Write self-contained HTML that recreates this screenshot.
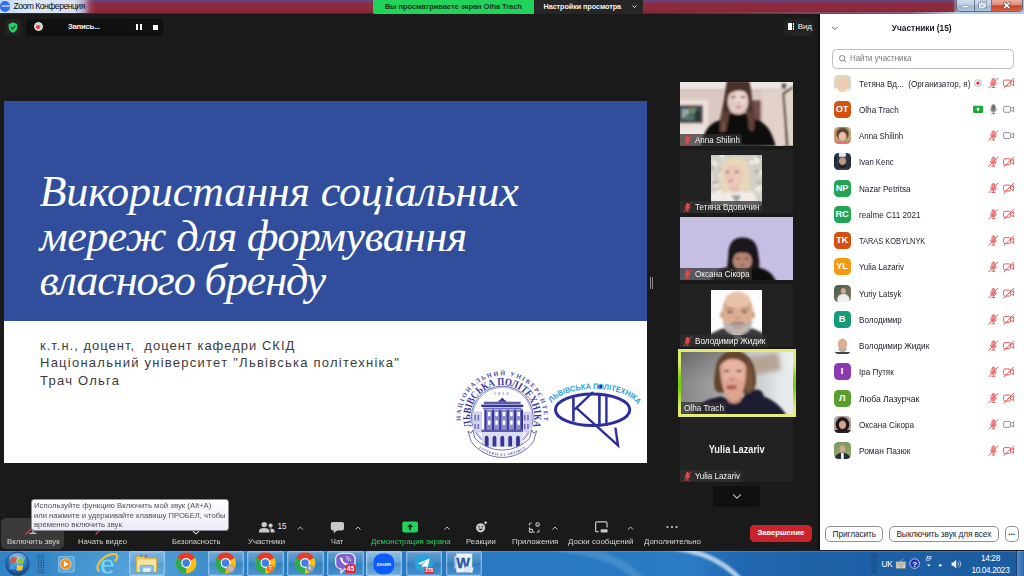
<!DOCTYPE html>
<html lang="ru">
<head>
<meta charset="utf-8">
<title>Zoom Конференция</title>
<style>
*{box-sizing:border-box;margin:0;padding:0}
html,body{width:1024px;height:576px;overflow:hidden;background:#1a1a1a;font-family:"Liberation Sans","DejaVu Sans",sans-serif;}
.abs{position:absolute}
svg{position:absolute;overflow:visible}
#root{position:relative;width:1024px;height:576px;overflow:hidden;background:#1a1a1a}
#titlebar{left:0;top:0;width:1024px;height:13.8px;background:linear-gradient(to bottom,#5b4c8e 0,#7a3a66 1.5px,#8d2c40 3.5px,#8e2a3c 9px,#802838 12.4px,#4a1c28 13.8px);}
#tb-left{left:0;top:0;width:96px;height:13.2px;background:linear-gradient(to right,#c6d9f1 0,#dfe9f6 30px,#d5e0f0 74px,rgba(200,195,222,.8) 84px,rgba(170,110,140,.35) 90px,rgba(150,60,80,0) 95px);}
#tb-title{left:13.4px;top:0;font-size:8.6px;line-height:13.4px;color:#0a0a0a;white-space:nowrap;letter-spacing:-.5px}
#banner{left:373px;top:0;width:160.5px;height:13.8px;background:#23d25a;color:#123a1c;font-size:7.6px;font-weight:bold;line-height:13.4px;text-align:center;white-space:nowrap;letter-spacing:-.1px;border-radius:0 0 0 2px}
#viewopt{left:533.5px;top:0;width:109.5px;height:13.8px;border-radius:0 0 2px 0;background:#262626;color:#f2f2f2;font-size:7.3px;font-weight:bold;line-height:13px;white-space:nowrap;padding-left:10px;letter-spacing:-.1px}
#slide{left:4px;top:101px;width:642.5px;height:362px;background:#fff}
#slide-blue{left:0;top:0;width:100%;height:219.5px;background:#304e9c}
#slide-title{left:35.6px;top:69.4px;color:#fff;font-family:"Liberation Serif","DejaVu Serif",serif;font-style:italic;font-size:44.2px;line-height:44.5px;white-space:nowrap}
#slide-sub{left:36px;top:236.2px;color:#3c3c3c;font-size:13px;line-height:17.2px;white-space:nowrap;letter-spacing:1.25px}
#panel{left:819.6px;top:13.8px;width:204.4px;height:536.7px;background:#fff}
#panel-edge{left:818.2px;top:13.8px;width:1.6px;height:536.7px;background:#101010}
.pname{position:absolute;left:858.6px;font-size:9.2px;line-height:12px;color:#232333;white-space:nowrap}
.pav{position:absolute;left:833.5px;width:17px;height:17px;border-radius:4.5px;color:#fff;font-weight:bold;font-size:9.3px;line-height:17.4px;text-align:center;overflow:hidden;letter-spacing:-.3px}
.tile{position:absolute;left:680px;width:113.3px;height:63.6px;background:#222;overflow:hidden}
.tlab{position:absolute;left:0;bottom:0;height:12px;background:rgba(48,48,48,.74);color:#f4f4f4;font-size:9.2px;line-height:12.4px;white-space:nowrap;padding:0 0 0 14.6px;border-radius:0 2px 0 0;overflow:hidden}
.tlab.nomic{padding-left:3.2px}
.tl{position:absolute;top:537.2px;font-size:8px;line-height:10px;color:#dcdcdc;white-space:nowrap}
#taskbar{left:0;top:550.5px;width:1024px;height:25.5px;background:linear-gradient(to right,#2f83c4 0,#3a8ccb 110px,#2a7cc0 300px,#2879c0 520px,#2a7cc2 690px,#2068b0 740px,#1e62a8 820px,#1b5a9f 1024px)}
.tbtn{position:absolute;top:551.2px;height:25px;border:1px solid rgba(190,220,250,.55);border-radius:2px;background:linear-gradient(to bottom,rgba(255,255,255,.28),rgba(255,255,255,.12) 45%,rgba(255,255,255,.04) 50%,rgba(255,255,255,.14));box-shadow:inset 0 0 0 1px rgba(255,255,255,.12)}
.pbtn{position:absolute;top:525.8px;height:16px;border:1px solid #8e8e9c;border-radius:5px;background:#fff;color:#232333;font-size:8.3px;line-height:14px;text-align:center;white-space:nowrap;letter-spacing:-.1px}
</style>
</head>
<body>
<div id="root">
  <div id="titlebar" class="abs"></div>
  <div id="tb-left" class="abs"></div>
  <div id="tb-title" class="abs">Zoom Конференция</div>
  <div id="banner" class="abs">Вы просматриваете экран Olha Trach</div>
  <div id="viewopt" class="abs">Настройки просмотра</div>
  <div class="abs" style="left:953px;top:0;width:71px;height:13.8px;background:linear-gradient(to right,rgba(168,192,220,0) 0,#a9c1dd 5px,#a9c1dd 100%)"></div>
<div class="abs" style="left:640px;top:11.6px;width:384px;height:2.2px;background:linear-gradient(to right,rgba(120,40,60,0),rgba(150,150,190,.5) 70%,#b4cbe4 82%)"></div>
<div class="abs" style="left:956px;top:-1px;width:66.5px;height:12.5px;border:1px solid #5f6f86;border-radius:0 0 4px 4px;background:linear-gradient(to bottom,#cfdcec 0,#bccde2 48%,#9fb7d4 52%,#aec3dd 100%)"></div>
<div class="abs" style="left:974.3px;top:0;width:1px;height:11px;background:#66768c"></div>
<div class="abs" style="left:991px;top:0;width:31px;height:11px;border-radius:0 0 4px 0;border-left:1px solid #66768c;background:linear-gradient(to bottom,#eeb0a2 0,#dd8a78 45%,#c9432a 52%,#d8603f 100%)"></div>
<svg style="left:0;top:0" width="1024" height="16" viewBox="0 0 1024 16"><rect x="962" y="5.4" width="7" height="2.4" rx=".6" fill="#fff" stroke="#5a6578" stroke-width=".5"/><g fill="none" stroke="#5a6578" stroke-width="2.2"><rect x="981.2" y="2" width="4.6" height="4.2"/><rect x="979.6" y="3.8" width="4.6" height="4.2"/></g><g fill="none" stroke="#fff" stroke-width="1.1"><rect x="981.2" y="2" width="4.6" height="4.2"/><rect x="979.6" y="3.8" width="4.6" height="4.2" fill="#b6c8de"/></g><path d="M1004.6 3.2L1009 7.6M1009 3.2L1004.6 7.6" stroke="#6a3a3a" stroke-width="2.8" stroke-linecap="square"/><path d="M1004.6 3.2L1009 7.6M1009 3.2L1004.6 7.6" stroke="#fff" stroke-width="1.6" stroke-linecap="square"/></svg>
<div class="abs" style="left:0;top:1px;width:10px;height:10.5px;border-radius:5px;background:#2d6ff0"></div><div class="abs" style="left:1.6px;top:4px;font-size:3px;line-height:4px;color:#fff;font-weight:bold">zoom</div>
<svg style="left:630.5px;top:4.4px" width="7" height="6" viewBox="0 0 7 6"><path d="M1.6 1.6L3.5 3.5L5.4 1.6" fill="none" stroke="#eee" stroke-width="1"/></svg>
<div class="abs" style="left:5px;top:19px;width:15.5px;height:16.5px;border-radius:3px;background:#222"></div>
<svg style="left:8px;top:22px" width="10" height="11" viewBox="0 0 10 11"><path d="M5 .3L9.3 1.9V5.2C9.3 7.9 7.4 9.8 5 10.7C2.6 9.8 .7 7.9 .7 5.2V1.9Z" fill="#25d060"/><path d="M2.9 5.4L4.4 6.9L7.2 3.9" fill="none" stroke="#14401f" stroke-width="1.2"/></svg>
<div class="abs" style="left:26px;top:19px;width:137px;height:16.5px;border-radius:3px;background:#0f0f0f"></div>
<div class="abs" style="left:129px;top:19px;width:34px;height:16.5px;border-radius:0 3px 3px 0;background:#111"></div>
<div class="abs" style="left:33.6px;top:22.4px;width:9px;height:9px;border-radius:5px;background:#cfcfcf;border:1px solid #e6e6e6"></div><div class="abs" style="left:36.1px;top:24.9px;width:4px;height:4px;border-radius:2px;background:#e8353a"></div>
<div class="abs" style="left:68px;top:21px;font-size:7.8px;font-weight:bold;line-height:12px;color:#f2f2f2;letter-spacing:-.3px">Запись...</div>
<div class="abs" style="left:135.8px;top:24.4px;width:2.2px;height:6px;background:#fff"></div><div class="abs" style="left:139.6px;top:24.4px;width:2.2px;height:6px;background:#fff"></div><div class="abs" style="left:152.8px;top:24.6px;width:5.4px;height:5.6px;background:#fff"></div>
<div class="abs" style="left:784px;top:19.3px;width:29.5px;height:16.4px;border-radius:4.5px;background:#232323"></div>
<div class="abs" style="left:788px;top:23.4px;width:4px;height:6.6px;background:#fff"></div><div class="abs" style="left:792.7px;top:23.4px;width:1.4px;height:1.6px;background:#fff;box-shadow:0 2.5px 0 #fff,0 5px 0 #fff"></div>
<div class="abs" style="left:797.8px;top:21.2px;font-size:8px;line-height:12px;color:#f4f4f4;letter-spacing:-.2px">Вид</div>
<div class="abs" style="left:650px;top:277px;width:1px;height:12px;background:#8a8a8a"></div><div class="abs" style="left:652px;top:277px;width:1px;height:12px;background:#8a8a8a"></div>
  <div id="slide" class="abs">
    <div id="slide-blue" class="abs"></div>
    <div id="slide-title" class="abs"><span id="st1" style="letter-spacing:-0.218px">Використання соціальних</span><br><span id="st2" style="letter-spacing:-0.636px">мереж для формування</span><br><span id="st3" style="letter-spacing:-1.122px">власного бренду</span></div>
    <div id="slide-sub" class="abs"><span style="letter-spacing:1px">к.т.н., доцент,&nbsp; доцент кафедри СКІД</span><br>Національний університет "Львівська політехніка"<br>Трач Ольга</div>
  </div>
  <svg id="logos" class="abs" style="left:0;top:0" width="1024" height="576" viewBox="0 0 1024 576">
    <defs>
      <path id="arcA" d="M460.86 420.63A41.6 41.6 0 1 1 543.74 420.63"/>
      <path id="arcB" d="M471.70 426.36A32.0 32.0 0 1 1 532.90 426.36"/>
      <path id="arcC" d="M476.46 446.29A40.2 40.2 0 0 0 528.14 446.29"/>
      <path id="arcD" d="M551.58 402.99A45 21 0 0 1 637.66 404.92"/>
    </defs>
    <g fill="#35359b" stroke="none" font-family="'Liberation Serif','DejaVu Serif',serif">
      <text font-size="6.3" font-weight="bold" fill="#4d4da0"><textPath href="#arcA" textLength="138.0" lengthAdjust="spacing">НАЦІОНАЛЬНИЙ УНІВЕРСИТЕТ</textPath></text>
      <text font-size="10.6" font-weight="bold"><textPath href="#arcB" textLength="119.5" lengthAdjust="spacingAndGlyphs">ЛЬВІВСЬКА ПОЛІТЕХНІКА</textPath></text>
      <text x="502.3" y="395" font-size="4.4" text-anchor="middle" fill="#4d4da0" letter-spacing="2">·1816·</text>
    </g>
    <g fill="none" stroke="#35359b">
      <path d="M487.79 444.28A30.9 30.9 0 1 1 516.81 444.28" stroke-width=".7"/>
      <path d="M486.61 442.10A29.6 29.6 0 1 1 517.99 442.10" stroke-width=".4"/>
    </g>
    <g fill="#35359b">
      <rect x="473" y="411.5" width="9" height="21" fill="#d2d2ea"/>
      <rect x="522.6" y="411.5" width="9" height="21" fill="#d2d2ea"/>
      <g fill="#6e6eb8"><rect x="474.4" y="415" width="1.5" height="5.5"/><rect x="477.6" y="415" width="1.5" height="5.5"/><rect x="527.2" y="415" width="1.5" height="5.5"/><rect x="524" y="415" width="1.5" height="5.5"/>
      <rect x="474.4" y="424" width="1.5" height="5"/><rect x="477.6" y="424" width="1.5" height="5"/><rect x="527.2" y="424" width="1.5" height="5"/><rect x="524" y="424" width="1.5" height="5"/></g>
      <path d="M497.5 401.8 L500.5 399.6 L502.3 397.6 L504.1 399.6 L507.1 401.8 Z"/>
      <rect x="484" y="401.7" width="36.6" height="2.4" fill="#5a5ab0"/>
      <rect x="481.3" y="404.6" width="42" height="2.4"/>
      <rect x="483" y="407.6" width="38.6" height="1.6" fill="#6e6eb8"/>
      <g fill="#8c8cc8"><rect x="486.7" y="409.5" width="5" height="20.5"/><rect x="494.1" y="409.5" width="5" height="20.5"/><rect x="501.5" y="409.5" width="5" height="20.5"/><rect x="508.9" y="409.5" width="5" height="20.5"/><rect x="516.3" y="409.5" width="5" height="20.5"/></g>
      <g fill="#fff"><rect x="487.9" y="412" width="2.6" height="4.2"/><rect x="487.9" y="420.5" width="2.6" height="4.2"/><rect x="495.3" y="412" width="2.6" height="4.2"/><rect x="495.3" y="420.5" width="2.6" height="4.2"/><rect x="502.7" y="412" width="2.6" height="4.2"/><rect x="502.7" y="420.5" width="2.6" height="4.2"/><rect x="510.1" y="412" width="2.6" height="4.2"/><rect x="510.1" y="420.5" width="2.6" height="4.2"/><rect x="517.4" y="412" width="2.6" height="4.2"/><rect x="517.4" y="420.5" width="2.6" height="4.2"/></g>
      <rect x="484.3" y="409.5" width="2.4" height="20.5"/><rect x="491.7" y="409.5" width="2.4" height="20.5"/><rect x="499.1" y="409.5" width="2.4" height="20.5"/><rect x="506.5" y="409.5" width="2.4" height="20.5"/><rect x="513.9" y="409.5" width="2.4" height="20.5"/><rect x="520.6" y="409.5" width="2.4" height="20.5"/>
      <rect x="481.5" y="429.6" width="41.4" height="2.6" fill="#5a5ab0"/>
      <rect x="482" y="432.8" width="40.7" height="14" fill="#dcdcef"/>
      <path d="M484.8 446.6v-8.6a1.9 2.2 0 0 1 3.8 0v8.6zM492.6 446.6v-8.6a1.9 2.2 0 0 1 3.8 0v8.6zM500.4 446.6v-8.6a1.9 2.2 0 0 1 3.8 0v8.6zM508.3 446.6v-8.6a1.9 2.2 0 0 1 3.8 0v8.6zM516.1 446.6v-8.6a1.9 2.2 0 0 1 3.8 0v8.6z"/>
    </g>
    <g fill="none" stroke="#35359b">
      <path d="M468 431 L471 433.2 L472.8 430 L475 438.4 A37.7 37.7 0 0 0 529.6 438.4 L531.8 430 L533.6 433.2 L536.6 431 L533.6 441.4 A38.6 38.6 0 0 1 471 441.4 Z" stroke-width=".7" fill="#fff"/>
    </g>
    <g font-family="'Liberation Serif',serif">
      <text font-size="3.6" fill="#4d4da0" font-weight="bold" letter-spacing=".55"><textPath href="#arcC" startOffset="50%" text-anchor="middle">LITTERIS ET ARTIBUS</textPath></text>
    </g>
    <g fill="none" stroke="#2e2e9c" stroke-width="3" stroke-linejoin="miter">
      <ellipse cx="592.6" cy="409.8" rx="37.2" ry="15.8"/>
      <path d="M573.4 397.5V421.5" stroke-width="2.6"/>
      <path d="M574.6 409.6L593 392" stroke-width="2.4"/>
      <path d="M576 407.6L618 445.3L615.4 427.6" stroke-width="2.4"/>
      <path d="M599.4 393V426" stroke-width="2.6"/>
      <path d="M606.4 396.5V425.6" stroke-width="2.4"/>
    </g>
    <circle cx="600.2" cy="386.8" r="2.3" fill="#2e2e9c"/>
    <text font-family="'Liberation Sans','DejaVu Sans',sans-serif" font-size="8" font-weight="bold" fill="#1f9fe2"><textPath href="#arcD" textLength="93.7" lengthAdjust="spacingAndGlyphs">ЛЬВІВСЬКА ПОЛІТЕХНІКА</textPath></text>
  </svg>
  <div class="tile" style="top:82.3px"><svg style="left:0;top:0" width="113.3" height="63.6" viewBox="0 0 113.3 63.6"><defs><filter id="b1" x="-10%" y="-10%" width="120%" height="120%"><feGaussianBlur stdDeviation=".85"/></filter><filter id="b1b" x="-10%" y="-10%" width="120%" height="120%"><feGaussianBlur stdDeviation="1.5"/></filter></defs><rect width="113.3" height="63.6" fill="#dcc8c3"/><g filter="url(#b1)"><rect x="-2" y="-2" width="118" height="9.2" fill="#ece6e4"/><rect x="-2" y="7" width="118" height="1.3" fill="#cdb9b4"/><rect x="82" y="8" width="22" height="57" fill="#e3d1cc"/><rect x="-2" y="17.6" width="30" height="32" fill="#e9dfdb"/><rect x="-2" y="46.6" width="32" height="18" fill="#efe5e0"/><rect x="-2" y="23.2" width="24.8" height="18" fill="#5e3d37"/><rect x="-2" y="24.8" width="23" height="14.8" fill="#3f5356"/><rect x="2" y="27" width="7" height="9" fill="#8fa6a6"/><rect x="9.6" y="25.6" width="6" height="6" fill="#6f8a68"/><rect x="15" y="29" width="5.4" height="9.6" fill="#26383a"/><rect x="5" y="33" width="9" height="5" fill="#55706a"/><rect x="71" y="18.4" width="9.6" height="24.4" fill="#6e4d4c"/><rect x="80.6" y="19" width="1.6" height="22" fill="#bfa29e"/><path d="M102.6 11.4L113.3 4V63.6H107Z" fill="#dcd5c8"/><path d="M102.2 11L113.3 3.4V6.2L104.6 12.2L108.6 63.6H106Z" fill="#65463c"/><rect x="101.6" y="1.4" width="4.6" height="5" fill="#4f4a48"/></g><g filter="url(#b1)"><path d="M47 -1C45 8 44.4 18 42 28C40.4 36 38.4 42 38.6 49.6L50 52L66 52L73.6 49.6C76.6 44 75 36 73.4 28C71.6 18 72 8 69 -1Z" fill="#49312a"/><path d="M21 64C23.6 50 28 42.6 38 38.8C44 36.8 48.6 35 50.4 30.6L66 30.6C67.6 35 72 37 79 39C88 42.4 92.6 52 95.6 64Z" fill="#0c0c0f"/><path d="M42 29C40.4 38 38.8 44 39.8 50.4L46.8 48.6C47.6 42 48.4 36 50 31Z" fill="#5e4034"/><path d="M73.2 29C75 38 75.6 44 73 50.2L68.2 46.6C68.8 42 68 36 66.4 31Z" fill="#5e4034"/><path d="M43.6 40C43 44 43 47 43.6 49.6" stroke="#8a6a58" stroke-width="1.4" fill="none"/><ellipse cx="58" cy="19.4" rx="10.4" ry="13.2" fill="#e3c8bf"/><ellipse cx="60" cy="16" rx="6" ry="7" fill="#ecd6cf"/><path d="M47 -1C46.4 5 46.8 9 48 12.8C52 9.4 56 8.2 60 8.4C64 8.6 66.8 10 69.2 12.8C70.2 8 70 4 69 -1Z" fill="#49312a"/><ellipse cx="53.4" cy="15.2" rx="2.4" ry=".9" fill="#5e443e"/><ellipse cx="63" cy="15.2" rx="2.4" ry=".9" fill="#5e443e"/><ellipse cx="58.4" cy="24.8" rx="3.2" ry=".9" fill="#b27870"/><ellipse cx="58.6" cy="20.8" rx="1.6" ry="1" fill="#c9a49a"/><path d="M50 28C53 32.6 63 32.6 66.4 28L66 31L50.4 31Z" fill="#c9a69c"/></g></svg><div class="tlab" style="width:61.7px"><svg style="left:2.6px;top:1.1px" width="9" height="10.6" viewBox="-5 -6 10 12"><g fill="none" stroke="#ea4a44" stroke-width="1" stroke-linecap="round"><rect x="-1.5" y="-4.4" width="3" height="5.8" rx="1.5" fill="#ea4a44"/><path d="M-2.8 -.4a2.8 2.8 0 0 0 5.6 0M0 2.5V4.2M-1.5 4.3H1.5"/><path d="M-4.2 5L4.2 -5" stroke-width="1.1"/></g></svg><span id="lb1" style="display:inline-block;transform-origin:0 50%;transform:scaleX(0.8703)">Anna Shilinh</span></div></div><div class="tile" style="top:149.8px;height:62.9px"><svg style="left:31px;top:5.5px" width="51" height="51.1" viewBox="0 0 51 51"><defs><filter id="b2" x="-10%" y="-10%" width="120%" height="120%"><feGaussianBlur stdDeviation=".8"/></filter><clipPath id="c2"><rect width="51" height="51"/></clipPath></defs><g clip-path="url(#c2)"><rect width="51" height="51" fill="#d3cfc5"/><g filter="url(#b2)"><ellipse cx="12.0" cy="4.5" rx="1.8" ry="1.0" fill="#efede8"/><ellipse cx="1.0" cy="24.2" rx="1.6" ry="1.1" fill="#f3f1ec"/><ellipse cx="27.4" cy="12.2" rx="1.4" ry="1.0" fill="#f3f1ec"/><ellipse cx="48.1" cy="1.1" rx="2.1" ry="2.2" fill="#b3ada0"/><ellipse cx="9.9" cy="13.6" rx="2.1" ry="1.2" fill="#b3ada0"/><ellipse cx="30.9" cy="29.6" rx="1.9" ry="1.3" fill="#efede8"/><ellipse cx="14.3" cy="41.6" rx="2.3" ry="2.6" fill="#f6f4f0"/><ellipse cx="0.4" cy="12.8" rx="2.2" ry="2.4" fill="#b3ada0"/><ellipse cx="25.9" cy="18.2" rx="2.0" ry="1.7" fill="#bdb7aa"/><ellipse cx="11.9" cy="11.4" rx="2.3" ry="1.2" fill="#f3f1ec"/><ellipse cx="31.9" cy="12.3" rx="1.9" ry="1.9" fill="#bdb7aa"/><ellipse cx="7.4" cy="29.6" rx="1.3" ry="1.2" fill="#efede8"/><ellipse cx="22.5" cy="8.1" rx="1.8" ry="1.3" fill="#f6f4f0"/><ellipse cx="28.5" cy="39.8" rx="1.3" ry="1.3" fill="#f3f1ec"/><ellipse cx="14.2" cy="25.6" rx="2.4" ry="1.8" fill="#f3f1ec"/><ellipse cx="9.1" cy="20.2" rx="1.3" ry="1.4" fill="#f3f1ec"/><ellipse cx="48.7" cy="32.3" rx="2.5" ry="1.8" fill="#f3f1ec"/><ellipse cx="16.4" cy="6.7" rx="2.1" ry="2.1" fill="#f6f4f0"/><ellipse cx="4.0" cy="27.2" rx="2.5" ry="1.5" fill="#b3ada0"/><ellipse cx="19.5" cy="42.3" rx="1.7" ry="1.3" fill="#f3f1ec"/><ellipse cx="23.2" cy="16.1" rx="2.3" ry="2.1" fill="#b3ada0"/><ellipse cx="22.4" cy="9.1" rx="2.5" ry="1.3" fill="#f3f1ec"/><ellipse cx="2.8" cy="7.4" rx="2.1" ry="2.0" fill="#efede8"/><ellipse cx="27.9" cy="25.6" rx="1.7" ry="1.0" fill="#f3f1ec"/><ellipse cx="27.0" cy="34.0" rx="1.8" ry="1.5" fill="#efede8"/><ellipse cx="12.3" cy="18.1" rx="1.3" ry="1.0" fill="#bdb7aa"/><ellipse cx="33.0" cy="18.8" rx="1.5" ry="0.8" fill="#efede8"/><ellipse cx="13.0" cy="10.7" rx="1.5" ry="1.2" fill="#efede8"/><ellipse cx="13.3" cy="14.3" rx="2.4" ry="2.2" fill="#b3ada0"/><ellipse cx="50.5" cy="17.7" rx="2.5" ry="2.1" fill="#f3f1ec"/><ellipse cx="4.7" cy="9.3" rx="2.4" ry="1.8" fill="#efede8"/><ellipse cx="33.5" cy="35.2" rx="2.1" ry="1.8" fill="#bdb7aa"/><ellipse cx="33.4" cy="30.2" rx="1.6" ry="1.8" fill="#bdb7aa"/><ellipse cx="3.8" cy="42.7" rx="2.5" ry="1.4" fill="#efede8"/><ellipse cx="45.8" cy="5.6" rx="2.6" ry="2.8" fill="#f3f1ec"/><ellipse cx="35.1" cy="20.4" rx="1.9" ry="2.1" fill="#bdb7aa"/><ellipse cx="11.1" cy="0.1" rx="2.5" ry="2.3" fill="#f3f1ec"/><ellipse cx="13.1" cy="17.4" rx="2.3" ry="2.5" fill="#bdb7aa"/><ellipse cx="28.1" cy="38.7" rx="1.5" ry="1.1" fill="#f6f4f0"/><ellipse cx="45.5" cy="34.0" rx="1.9" ry="1.5" fill="#f6f4f0"/><ellipse cx="4.0" cy="30.6" rx="1.4" ry="1.5" fill="#f6f4f0"/><ellipse cx="31.0" cy="6.1" rx="1.7" ry="1.9" fill="#f6f4f0"/><ellipse cx="15.1" cy="15.3" rx="1.3" ry="1.1" fill="#f6f4f0"/><ellipse cx="10.5" cy="43.0" rx="1.7" ry="1.9" fill="#bdb7aa"/><ellipse cx="20.4" cy="3.4" rx="2.5" ry="2.1" fill="#b3ada0"/><ellipse cx="22.1" cy="37.7" rx="2.3" ry="2.2" fill="#f3f1ec"/><ellipse cx="48.0" cy="28.0" rx="2.5" ry="2.0" fill="#bdb7aa"/><ellipse cx="40.7" cy="7.4" rx="2.4" ry="2.4" fill="#efede8"/><ellipse cx="16.7" cy="37.8" rx="1.6" ry="1.6" fill="#f3f1ec"/><ellipse cx="0.3" cy="13.7" rx="2.0" ry="2.1" fill="#bdb7aa"/><ellipse cx="30.7" cy="23.2" rx="1.9" ry="2.1" fill="#bdb7aa"/><ellipse cx="18.2" cy="33.7" rx="2.6" ry="2.5" fill="#f3f1ec"/><ellipse cx="31.1" cy="13.8" rx="2.5" ry="2.6" fill="#bdb7aa"/><ellipse cx="29.0" cy="41.2" rx="1.9" ry="1.8" fill="#bdb7aa"/><ellipse cx="22.5" cy="6.2" rx="2.3" ry="2.7" fill="#b3ada0"/><ellipse cx="17.3" cy="19.1" rx="2.0" ry="1.3" fill="#f6f4f0"/><ellipse cx="46.0" cy="16.4" rx="2.0" ry="2.0" fill="#b3ada0"/><ellipse cx="45.0" cy="3.4" rx="2.1" ry="1.5" fill="#efede8"/><ellipse cx="19.0" cy="7.7" rx="2.4" ry="1.3" fill="#f6f4f0"/><ellipse cx="48.4" cy="36.5" rx="2.3" ry="1.4" fill="#f3f1ec"/><path d="M-1 52V40C3 36 9 34.6 14 33.6L36 34C40 35.6 43 38 45 41.6L46 52Z" fill="#f2ece8"/><path d="M20 40L26 49L30 40Z" fill="#9aa6a8"/><path d="M24 2C14 2 9.6 9 10 18C10.2 26 9 33 11.6 38.6L20 36L31 36L37 38C40.6 32 38.6 25 38.6 18C38.6 9 34 2 24 2Z" fill="#e7d8ba"/><rect x="19" y="28" width="9" height="9" fill="#e6bfae"/><ellipse cx="22.6" cy="19.6" rx="9.8" ry="11.8" fill="#ebc8b8"/><path d="M12.6 14C14 8 19 5.4 24 5.6C30 6 33.6 10 34 16C30 12 26 9.6 22 9.4C18 9.4 15 11 12.6 14Z" fill="#e9d8b8"/><ellipse cx="16.6" cy="17" rx="1.9" ry=".9" fill="#5a5058"/><ellipse cx="25.6" cy="16.6" rx="1.9" ry=".9" fill="#5a5058"/><ellipse cx="19.6" cy="25.8" rx="2.6" ry="1" fill="#d8708a"/></g></g></svg><div class="tlab" style="width:82.2px"><svg style="left:2.6px;top:1.1px" width="9" height="10.6" viewBox="-5 -6 10 12"><g fill="none" stroke="#ea4a44" stroke-width="1" stroke-linecap="round"><rect x="-1.5" y="-4.4" width="3" height="5.8" rx="1.5" fill="#ea4a44"/><path d="M-2.8 -.4a2.8 2.8 0 0 0 5.6 0M0 2.5V4.2M-1.5 4.3H1.5"/><path d="M-4.2 5L4.2 -5" stroke-width="1.1"/></g></svg><span id="lb2" style="display:inline-block;transform-origin:0 50%;transform:scaleX(0.8782)">Тетяна Вдовичин</span></div></div><div class="tile" style="top:216.8px;height:63.2px;background:#c6bee3"><svg style="left:0;top:0" width="113.3" height="63.2" viewBox="0 0 113.3 63.2"><defs><filter id="b3" x="-10%" y="-10%" width="120%" height="120%"><feGaussianBlur stdDeviation=".8"/></filter></defs><g filter="url(#b3)"><path d="M30 66C33 56 40 51.4 48 50L76 50C86 51.6 93 56 96.6 66Z" fill="#0e0c10"/><path d="M62.6 20.4C52 20.4 48.6 28 48.4 36C48.2 42 47 47 47.6 52L78.6 52C80.4 46 78.6 41 78 35C77.2 27 73 20.4 62.6 20.4Z" fill="#1b151b"/><ellipse cx="62.4" cy="44" rx="9.6" ry="9.4" fill="#b58674"/><path d="M52 38C53 33 57 31.6 62 32C67 32 71.4 33.6 72.6 38.6C68 36.6 66 35.6 62 35.6C58 35.6 55 36.4 52 38Z" fill="#1b151b"/><ellipse cx="58" cy="41.4" rx="1.8" ry=".8" fill="#3a2826"/><ellipse cx="66.6" cy="41.4" rx="1.8" ry=".8" fill="#3a2826"/><ellipse cx="62.4" cy="49" rx="3" ry="1" fill="#8a5a52"/><ellipse cx="62" cy="55" rx="6" ry="3" fill="#a87c6a"/></g></svg><div class="tlab" style="width:72.4px"><svg style="left:2.6px;top:1.1px" width="9" height="10.6" viewBox="-5 -6 10 12"><g fill="none" stroke="#ea4a44" stroke-width="1" stroke-linecap="round"><rect x="-1.5" y="-4.4" width="3" height="5.8" rx="1.5" fill="#ea4a44"/><path d="M-2.8 -.4a2.8 2.8 0 0 0 5.6 0M0 2.5V4.2M-1.5 4.3H1.5"/><path d="M-4.2 5L4.2 -5" stroke-width="1.1"/></g></svg><span id="lb3" style="display:inline-block;transform-origin:0 50%;transform:scaleX(0.8829)">Оксана Сікора</span></div></div><div class="tile" style="top:283.8px;height:63.2px"><svg style="left:31px;top:6.3px" width="51" height="51" viewBox="0 0 51 51"><defs><filter id="b4" x="-10%" y="-10%" width="120%" height="120%"><feGaussianBlur stdDeviation=".8"/></filter><clipPath id="c4"><rect width="51" height="51"/></clipPath></defs><g clip-path="url(#c4)"><rect width="51" height="51" fill="#fdfdfd"/><g filter="url(#b4)"><path d="M-1 52V44L11 38.6L42 38.6L52 43V52Z" fill="#3b3b3d"/><path d="M19 40L26.6 52L34 40Z" fill="#d8d8dc"/><ellipse cx="11" cy="25" rx="1.8" ry="3.6" fill="#d09c80"/><ellipse cx="42.2" cy="25" rx="1.8" ry="3.6" fill="#d09c80"/><ellipse cx="26.6" cy="22" rx="15.4" ry="20.6" fill="#dbad91"/><ellipse cx="26.6" cy="10" rx="12.4" ry="8" fill="#e8c3aa"/><path d="M11.6 30C12 38 16 44.6 26.6 45.6C37 44.6 41 38 41.6 30C38 34 34 33.6 26.6 33.6C19 33.6 15 34 11.6 30Z" fill="#bdb5b0"/><path d="M18.6 35.6C20 32.6 24 31.6 26.6 31.8C30 31.6 33.6 32.6 35 35.6C32 34.6 29 34.4 26.6 34.4C24 34.4 21 34.6 18.6 35.6Z" fill="#8e8680"/><ellipse cx="26.6" cy="37" rx="4.6" ry="1.2" fill="#c09488"/><ellipse cx="19" cy="22" rx="2.8" ry="1" fill="#4a3a36"/><ellipse cx="33.4" cy="22" rx="2.8" ry="1" fill="#4a3a36"/><path d="M15 19.6C17 18 21 18 23 19.4M30 19.4C32 18 36 18 38 19.6" fill="none" stroke="#7a6258" stroke-width="1"/><ellipse cx="26.4" cy="28" rx="2.6" ry="1.6" fill="#c8957c"/></g></g></svg><div class="tlab" style="width:86.7px"><svg style="left:2.6px;top:1.1px" width="9" height="10.6" viewBox="-5 -6 10 12"><g fill="none" stroke="#ea4a44" stroke-width="1" stroke-linecap="round"><rect x="-1.5" y="-4.4" width="3" height="5.8" rx="1.5" fill="#ea4a44"/><path d="M-2.8 -.4a2.8 2.8 0 0 0 5.6 0M0 2.5V4.2M-1.5 4.3H1.5"/><path d="M-4.2 5L4.2 -5" stroke-width="1.1"/></g></svg><span id="lb4" style="display:inline-block;transform-origin:0 50%;transform:scaleX(0.8883)">Володимир Жидик</span></div></div><div class="abs" style="left:677.6px;top:348.6px;width:118.2px;height:68.4px;background:linear-gradient(to bottom,#e3ea6e 0,#dfe96a 22%,#7fd60a 42%,#6fd000 55%,#9fdc28 68%,#e3ea6e 86%,#e6ec72 100%)"></div><div class="abs" style="left:680.2px;top:348.6px;width:113px;height:3px;background:#e3ea6e"></div><div class="abs" style="left:680.2px;top:414.4px;width:113px;height:2.6px;background:#e6ec72"></div><div class="tile" style="left:680.6px;top:351.6px;width:112.4px;height:62.9px;background:#9a9a9a"><svg style="left:0;top:0" width="112.4" height="62.9" viewBox="0 0 112.4 62.9"><defs><filter id="b5" x="-10%" y="-10%" width="120%" height="120%"><feGaussianBlur stdDeviation=".9"/></filter><filter id="b5b" x="-10%" y="-10%" width="120%" height="120%"><feGaussianBlur stdDeviation="2.4"/></filter><linearGradient id="g5" x1="0" y1="0" x2="1" y2="0"><stop offset="0" stop-color="#878787"/><stop offset=".3" stop-color="#a2a2a2"/><stop offset=".62" stop-color="#c4c6c8"/><stop offset=".85" stop-color="#dfe3e6"/><stop offset="1" stop-color="#eef1f3"/></linearGradient><linearGradient id="g5v" x1="0" y1="0" x2="0" y2="1"><stop offset="0" stop-color="#000" stop-opacity=".22"/><stop offset=".5" stop-color="#000" stop-opacity="0"/><stop offset="1" stop-color="#fff" stop-opacity=".12"/></linearGradient></defs><rect width="112.4" height="62.9" fill="url(#g5)"/><rect width="60" height="62.9" fill="url(#g5v)"/><g filter="url(#b5b)"><path d="M68 6L97 0L100 18L72 23Z" fill="#b4a494"/><rect x="98" y="20" width="16" height="44" fill="#e6eaee"/></g><g filter="url(#b5)"><path d="M10 64C14 56 21 50 29 47L40 44.6L46 47L62 46C64 41 69 37.4 75.6 37.6C80 38 82.4 40.6 82.8 44.4C92 47.4 100 54 106 64Z" fill="#1c1c31"/><path d="M50 -1C40 1 35.4 8 34.4 18C33.4 26 31.6 32 34.6 38.4C37 41 41 41.4 44 40L66 42L71.6 39.8C76 34 75.4 27 74 19C72.4 9 66 0 56 -1Z" fill="#63452f"/><path d="M66 8C71 14 72.6 24 71.6 34C71 37 69.6 39.6 67.6 41L64 36C66.6 28 66.6 16 66 8Z" fill="#7a573a"/><path d="M45 40L46.6 49C50 52.6 56 52.6 59.6 49L62.6 40Z" fill="#c98f7a"/><path d="M39 18C38 10 43 4.6 52 4.6C61 4.6 66 10 65.4 19C65 28 64 36 60 43.6C57.6 49.4 50 50.4 46.6 45.8C42 39.6 39.6 28 39 18Z" fill="#dea492"/><path d="M43 12C46 8 56 7 61 11C63 16 63 24 61 30C57 24 47 24 43.6 30C42 24 42 17 43 12Z" fill="#e7b3a2"/><path d="M37.4 16C38 8 43 1 52 0.6C61 0.6 67 7 67.6 16C63 10 58 6.8 52 6.8C46 6.8 41 10 37.4 16Z" fill="#63452f"/><ellipse cx="45.6" cy="19" rx="2.8" ry="1" fill="#54382e"/><ellipse cx="58" cy="19" rx="2.8" ry="1" fill="#54382e"/><ellipse cx="50.8" cy="27.4" rx="2.4" ry="1.8" fill="#cc8a78"/><ellipse cx="50.4" cy="35.2" rx="5.4" ry="2" fill="#a6564a"/><path d="M40 47C44 50 50 52.6 54 52.6C58 52.6 62 50 64 46L70 50L66 64H36Z" fill="#1c1c31"/></g></svg><div class="tlab nomic" style="width:45.4px"><span id="lb5" style="display:inline-block;transform-origin:0 50%;transform:scaleX(0.8901)">Olha Trach</span></div></div><div class="tile" style="top:418px;height:63.8px"><div class="abs" style="left:0;top:25.4px;width:113.3px;text-align:center;font-size:10.8px;font-weight:bold;color:#f2f2f2;line-height:13px"><span id="ylbig" style="display:inline-block;transform-origin:50% 50%;transform:scaleX(0.8560)">Yulia Lazariv</span></div><div class="tlab" style="width:62px"><svg style="left:2.6px;top:1.1px" width="9" height="10.6" viewBox="-5 -6 10 12"><g fill="none" stroke="#ea4a44" stroke-width="1" stroke-linecap="round"><rect x="-1.5" y="-4.4" width="3" height="5.8" rx="1.5" fill="#ea4a44"/><path d="M-2.8 -.4a2.8 2.8 0 0 0 5.6 0M0 2.5V4.2M-1.5 4.3H1.5"/><path d="M-4.2 5L4.2 -5" stroke-width="1.1"/></g></svg><span id="lb6" style="display:inline-block;transform-origin:0 50%;transform:scaleX(0.8657)">Yulia Lazariv</span></div></div><div class="abs" style="left:713px;top:486px;width:47px;height:21.4px;border-radius:3px;background:#101010"></div><svg style="left:731px;top:492px" width="12" height="9" viewBox="0 0 12 9"><path d="M2 2.4L6 6.2L10 2.4" fill="none" stroke="#b8b8c4" stroke-width="1.2"/></svg>
  <div id="panel-edge" class="abs"></div>
  <div id="panel" class="abs"></div>
  <svg style="left:831px;top:25px" width="8" height="7" viewBox="0 0 8 7"><path d="M1.2 2L3.8 4.6L6.4 2" fill="none" stroke="#555" stroke-width="1"/></svg>
<div class="abs" style="left:820px;top:21.3px;width:204px;text-align:center;font-size:9.4px;font-weight:bold;line-height:13px;color:#1a1a24;padding-right:.8px"><span id="phead" style="display:inline-block;transform-origin:50% 50%;transform:scaleX(0.8865)">Участники (15)</span></div>
<div class="abs" style="left:831.5px;top:48.5px;width:182px;height:20.3px;border:1px solid #b9b9d2;border-radius:4.5px;background:#fff"></div>
<svg style="left:838px;top:54px" width="10" height="10" viewBox="0 0 10 10"><circle cx="4.2" cy="4.2" r="2.7" fill="none" stroke="#777" stroke-width=".9"/><path d="M6.2 6.2L8.2 8.2" stroke="#777" stroke-width=".9"/></svg>
<div class="abs" style="left:849.8px;top:52.4px;font-size:9.2px;line-height:12px;color:#77777f"><span id="psearch" style="display:inline-block;transform-origin:0 50%;transform:scaleX(0.8574)">Найти участника</span></div>
<div class="pbtn" style="left:825.3px;width:58px">Пригласить</div>
<div class="pbtn" style="left:888.6px;width:110.4px">Выключить звук для всех</div>
<div class="pbtn" style="left:1004.6px;width:14px;line-height:10px;font-weight:bold;letter-spacing:0">...</div>
  <div class="pav" style="top:74.6px;background:radial-gradient(ellipse 30% 34% at 50% 52%,#f0cdbd 0,#efc9b6 70%,rgba(0,0,0,0) 100%),radial-gradient(ellipse 46% 55% at 50% 52%,#ecd9b4 0,#e6d2ac 75%,rgba(0,0,0,0) 100%),linear-gradient(#fff,#fff) 50% 100%/80% 22% no-repeat,#d9d6cf"></div>
<div class="pname" style="top:77.5px"><span id="pn0" style="display:inline-block;transform-origin:0 50%;transform:scaleX(0.8817)">Тетяна Вд...&nbsp; (Организатор, я)</span></div>
<div class="pav" style="top:100.8px;background:#d6500e">OT</div>
<div class="pname" style="top:103.8px"><span id="pn1" style="display:inline-block;transform-origin:0 50%;transform:scaleX(0.8834)">Olha Trach</span></div>
<div class="pav" style="top:127.1px;background:radial-gradient(ellipse 26% 30% at 50% 55%,#eec4b0 0,#e9bba6 75%,rgba(0,0,0,0) 100%),radial-gradient(ellipse 42% 40% at 50% 40%,#5a4030 0,#5e4433 75%,rgba(0,0,0,0) 100%),linear-gradient(#e8707a,#e8707a) 50% 100%/100% 16% no-repeat,linear-gradient(to right,#d89a70 0,#b9a070 25%,#9aa268 60%,#b8b070 100%)"></div>
<div class="pname" style="top:130.0px"><span id="pn2" style="display:inline-block;transform-origin:0 50%;transform:scaleX(0.8567)">Anna Shilinh</span></div>
<div class="pav" style="top:153.3px;background:radial-gradient(ellipse 24% 26% at 50% 48%,#c9a28c 0,#bb917b 75%,rgba(0,0,0,0) 100%),radial-gradient(ellipse 28% 24% at 50% 70%,#2a2422 0,#2a2422 80%,rgba(0,0,0,0) 100%),linear-gradient(#e8e8ec,#e8e8ec) 50% 0/40% 22% no-repeat,linear-gradient(to right,#20242c 0,#3a5070 50%,#20242c 100%)"></div>
<div class="pname" style="top:156.2px"><span id="pn3" style="display:inline-block;transform-origin:0 50%;transform:scaleX(0.8468)">Ivan Kenc</span></div>
<div class="pav" style="top:179.6px;background:#23a455">NP</div>
<div class="pname" style="top:182.5px"><span id="pn4" style="display:inline-block;transform-origin:0 50%;transform:scaleX(0.8846)">Nazar Petritsa</span></div>
<div class="pav" style="top:205.8px;background:#23a455">RC</div>
<div class="pname" style="top:208.8px"><span id="pn5" style="display:inline-block;transform-origin:0 50%;transform:scaleX(0.8795)">realme C11 2021</span></div>
<div class="pav" style="top:232.1px;background:#d6500e">TK</div>
<div class="pname" style="top:235.0px"><span id="pn6" style="display:inline-block;transform-origin:0 50%;transform:scaleX(0.8081)">TARAS KOBYLNYK</span></div>
<div class="pav" style="top:258.4px;background:#f39a12">YL</div>
<div class="pname" style="top:261.2px"><span id="pn7" style="display:inline-block;transform-origin:0 50%;transform:scaleX(0.8638)">Yulia Lazariv</span></div>
<div class="pav" style="top:284.6px;background:radial-gradient(ellipse 18% 20% at 55% 35%,#d8b29a 0,#c9a088 75%,rgba(0,0,0,0) 100%),radial-gradient(ellipse 40% 36% at 55% 85%,#f2f2f2 0,#ebebeb 80%,rgba(0,0,0,0) 100%),linear-gradient(135deg,#4a5a44 0,#6a6a58 50%,#8a7a60 100%)"></div>
<div class="pname" style="top:287.5px"><span id="pn8" style="display:inline-block;transform-origin:0 50%;transform:scaleX(0.8560)">Yuriy Latsyk</span></div>
<div class="pav" style="top:310.9px;background:#169b78">В</div>
<div class="pname" style="top:313.8px"><span id="pn9" style="display:inline-block;transform-origin:0 50%;transform:scaleX(0.8830)">Володимир</span></div>
<div class="pav" style="top:337.1px;background:radial-gradient(ellipse 30% 36% at 50% 42%,#e2b59a 0,#d8a88c 78%,rgba(0,0,0,0) 100%),radial-gradient(ellipse 26% 18% at 50% 72%,#b8b0aa 0,#b0a8a2 80%,rgba(0,0,0,0) 100%),linear-gradient(#444,#444) 50% 100%/100% 14% no-repeat,#fbfbfb"></div>
<div class="pname" style="top:340.0px"><span id="pn10" style="display:inline-block;transform-origin:0 50%;transform:scaleX(0.8870)">Володимир Жидик</span></div>
<div class="pav" style="top:363.4px;background:#8a3bb0">І</div>
<div class="pname" style="top:366.2px"><span id="pn11" style="display:inline-block;transform-origin:0 50%;transform:scaleX(0.8733)">Іра Путяк</span></div>
<div class="pav" style="top:389.6px;background:#5a9f2e">Л</div>
<div class="pname" style="top:392.5px"><span id="pn12" style="display:inline-block;transform-origin:0 50%;transform:scaleX(0.9408)">Люба Лазурчак</span></div>
<div class="pav" style="top:415.9px;background:radial-gradient(ellipse 24% 28% at 50% 52%,#d9a890 0,#cf9c84 75%,rgba(0,0,0,0) 100%),radial-gradient(ellipse 44% 48% at 50% 50%,#1c1418 0,#20181c 82%,rgba(0,0,0,0) 100%),linear-gradient(#2a2226,#2a2226) 50% 100%/100% 18% no-repeat,#b9a6a0"></div>
<div class="pname" style="top:418.8px"><span id="pn13" style="display:inline-block;transform-origin:0 50%;transform:scaleX(0.8910)">Оксана Сікора</span></div>
<div class="pav" style="top:442.1px;background:radial-gradient(ellipse 20% 24% at 50% 40%,#dcae94 0,#d0a088 78%,rgba(0,0,0,0) 100%),linear-gradient(#f4f4f4,#f4f4f4) 50% 100%/16% 38% no-repeat,radial-gradient(ellipse 50% 40% at 50% 100%,#2a2e3a 0,#2a2e3a 85%,rgba(0,0,0,0) 100%),linear-gradient(#7a9a5a,#9aa878)"></div>
<div class="pname" style="top:445.0px"><span id="pn14" style="display:inline-block;transform-origin:0 50%;transform:scaleX(0.9095)">Роман Пазюк</span></div>
  <svg style="left:0;top:0" width="1024" height="576" viewBox="0 0 1024 576"><g transform="translate(993.4,83.1)" fill="none" stroke="#e0575a" stroke-width=".9" stroke-linecap="round"><rect x="-1.5" y="-4.6" width="3" height="6" rx="1.5" fill="#e0575a" fill-opacity=".55"/><path d="M-2.9 -.4a2.9 2.9 0 0 0 5.8 0M0 2.6V4.3M-1.6 4.4H1.6"/><path d="M-4.6 4.8L4.4 -4.8" stroke-width="1"/></g><g transform="translate(1003.6,83.1)" fill="none" stroke="#e0575a" stroke-width=".95" stroke-linejoin="round"><rect x="0" y="-3" width="7" height="6" rx="1.4"/><path d="M7.6 -1L10 -2.6V2.6L7.6 1"/><path d="M.4 5L10 -4.8" stroke-width="1" stroke-linecap="round"/></g><circle cx="977.9" cy="83.1" r="3.4" fill="#fff" stroke="#9a9aa2" stroke-width=".7"/><circle cx="977.9" cy="83.1" r="1.6" fill="#e8262d"/><g transform="translate(993.4,109.3)" fill="none" stroke="#77777f" stroke-width=".9" stroke-linecap="round"><rect x="-1.7" y="-4.6" width="3.4" height="6.2" rx="1.7" fill="#6e6e76"/><path d="M-2.9 -.2a2.9 2.9 0 0 0 5.8 0M0 2.8V4.3M-1.6 4.4H1.6"/></g><g transform="translate(1003.6,109.3)" fill="none" stroke="#8a8a98" stroke-width=".95" stroke-linejoin="round"><rect x="0" y="-3" width="7" height="6" rx="1.4"/><path d="M7.6 -1L10 -2.6V2.6L7.6 1"/></g><rect x="973" y="105.7" width="10.2" height="7.2" rx="1.2" fill="#1da83e"/><path d="M978.1 107.3L980 109.3H978.8V111.1H977.4V109.3H976.2Z" fill="#fff"/><g transform="translate(993.4,135.6)" fill="none" stroke="#e0575a" stroke-width=".9" stroke-linecap="round"><rect x="-1.5" y="-4.6" width="3" height="6" rx="1.5" fill="#e0575a" fill-opacity=".55"/><path d="M-2.9 -.4a2.9 2.9 0 0 0 5.8 0M0 2.6V4.3M-1.6 4.4H1.6"/><path d="M-4.6 4.8L4.4 -4.8" stroke-width="1"/></g><g transform="translate(1003.6,135.6)" fill="none" stroke="#8a8a98" stroke-width=".95" stroke-linejoin="round"><rect x="0" y="-3" width="7" height="6" rx="1.4"/><path d="M7.6 -1L10 -2.6V2.6L7.6 1"/></g><g transform="translate(993.4,161.8)" fill="none" stroke="#e0575a" stroke-width=".9" stroke-linecap="round"><rect x="-1.5" y="-4.6" width="3" height="6" rx="1.5" fill="#e0575a" fill-opacity=".55"/><path d="M-2.9 -.4a2.9 2.9 0 0 0 5.8 0M0 2.6V4.3M-1.6 4.4H1.6"/><path d="M-4.6 4.8L4.4 -4.8" stroke-width="1"/></g><g transform="translate(1003.6,161.8)" fill="none" stroke="#e0575a" stroke-width=".95" stroke-linejoin="round"><rect x="0" y="-3" width="7" height="6" rx="1.4"/><path d="M7.6 -1L10 -2.6V2.6L7.6 1"/><path d="M.4 5L10 -4.8" stroke-width="1" stroke-linecap="round"/></g><g transform="translate(993.4,188.1)" fill="none" stroke="#e0575a" stroke-width=".9" stroke-linecap="round"><rect x="-1.5" y="-4.6" width="3" height="6" rx="1.5" fill="#e0575a" fill-opacity=".55"/><path d="M-2.9 -.4a2.9 2.9 0 0 0 5.8 0M0 2.6V4.3M-1.6 4.4H1.6"/><path d="M-4.6 4.8L4.4 -4.8" stroke-width="1"/></g><g transform="translate(1003.6,188.1)" fill="none" stroke="#e0575a" stroke-width=".95" stroke-linejoin="round"><rect x="0" y="-3" width="7" height="6" rx="1.4"/><path d="M7.6 -1L10 -2.6V2.6L7.6 1"/><path d="M.4 5L10 -4.8" stroke-width="1" stroke-linecap="round"/></g><g transform="translate(993.4,214.3)" fill="none" stroke="#e0575a" stroke-width=".9" stroke-linecap="round"><rect x="-1.5" y="-4.6" width="3" height="6" rx="1.5" fill="#e0575a" fill-opacity=".55"/><path d="M-2.9 -.4a2.9 2.9 0 0 0 5.8 0M0 2.6V4.3M-1.6 4.4H1.6"/><path d="M-4.6 4.8L4.4 -4.8" stroke-width="1"/></g><g transform="translate(1003.6,214.3)" fill="none" stroke="#e0575a" stroke-width=".95" stroke-linejoin="round"><rect x="0" y="-3" width="7" height="6" rx="1.4"/><path d="M7.6 -1L10 -2.6V2.6L7.6 1"/><path d="M.4 5L10 -4.8" stroke-width="1" stroke-linecap="round"/></g><g transform="translate(993.4,240.6)" fill="none" stroke="#e0575a" stroke-width=".9" stroke-linecap="round"><rect x="-1.5" y="-4.6" width="3" height="6" rx="1.5" fill="#e0575a" fill-opacity=".55"/><path d="M-2.9 -.4a2.9 2.9 0 0 0 5.8 0M0 2.6V4.3M-1.6 4.4H1.6"/><path d="M-4.6 4.8L4.4 -4.8" stroke-width="1"/></g><g transform="translate(1003.6,240.6)" fill="none" stroke="#e0575a" stroke-width=".95" stroke-linejoin="round"><rect x="0" y="-3" width="7" height="6" rx="1.4"/><path d="M7.6 -1L10 -2.6V2.6L7.6 1"/><path d="M.4 5L10 -4.8" stroke-width="1" stroke-linecap="round"/></g><g transform="translate(993.4,266.9)" fill="none" stroke="#e0575a" stroke-width=".9" stroke-linecap="round"><rect x="-1.5" y="-4.6" width="3" height="6" rx="1.5" fill="#e0575a" fill-opacity=".55"/><path d="M-2.9 -.4a2.9 2.9 0 0 0 5.8 0M0 2.6V4.3M-1.6 4.4H1.6"/><path d="M-4.6 4.8L4.4 -4.8" stroke-width="1"/></g><g transform="translate(1003.6,266.9)" fill="none" stroke="#e0575a" stroke-width=".95" stroke-linejoin="round"><rect x="0" y="-3" width="7" height="6" rx="1.4"/><path d="M7.6 -1L10 -2.6V2.6L7.6 1"/><path d="M.4 5L10 -4.8" stroke-width="1" stroke-linecap="round"/></g><g transform="translate(993.4,293.1)" fill="none" stroke="#e0575a" stroke-width=".9" stroke-linecap="round"><rect x="-1.5" y="-4.6" width="3" height="6" rx="1.5" fill="#e0575a" fill-opacity=".55"/><path d="M-2.9 -.4a2.9 2.9 0 0 0 5.8 0M0 2.6V4.3M-1.6 4.4H1.6"/><path d="M-4.6 4.8L4.4 -4.8" stroke-width="1"/></g><g transform="translate(1003.6,293.1)" fill="none" stroke="#e0575a" stroke-width=".95" stroke-linejoin="round"><rect x="0" y="-3" width="7" height="6" rx="1.4"/><path d="M7.6 -1L10 -2.6V2.6L7.6 1"/><path d="M.4 5L10 -4.8" stroke-width="1" stroke-linecap="round"/></g><g transform="translate(993.4,319.4)" fill="none" stroke="#e0575a" stroke-width=".9" stroke-linecap="round"><rect x="-1.5" y="-4.6" width="3" height="6" rx="1.5" fill="#e0575a" fill-opacity=".55"/><path d="M-2.9 -.4a2.9 2.9 0 0 0 5.8 0M0 2.6V4.3M-1.6 4.4H1.6"/><path d="M-4.6 4.8L4.4 -4.8" stroke-width="1"/></g><g transform="translate(1003.6,319.4)" fill="none" stroke="#e0575a" stroke-width=".95" stroke-linejoin="round"><rect x="0" y="-3" width="7" height="6" rx="1.4"/><path d="M7.6 -1L10 -2.6V2.6L7.6 1"/><path d="M.4 5L10 -4.8" stroke-width="1" stroke-linecap="round"/></g><g transform="translate(993.4,345.6)" fill="none" stroke="#e0575a" stroke-width=".9" stroke-linecap="round"><rect x="-1.5" y="-4.6" width="3" height="6" rx="1.5" fill="#e0575a" fill-opacity=".55"/><path d="M-2.9 -.4a2.9 2.9 0 0 0 5.8 0M0 2.6V4.3M-1.6 4.4H1.6"/><path d="M-4.6 4.8L4.4 -4.8" stroke-width="1"/></g><g transform="translate(1003.6,345.6)" fill="none" stroke="#e0575a" stroke-width=".95" stroke-linejoin="round"><rect x="0" y="-3" width="7" height="6" rx="1.4"/><path d="M7.6 -1L10 -2.6V2.6L7.6 1"/><path d="M.4 5L10 -4.8" stroke-width="1" stroke-linecap="round"/></g><g transform="translate(993.4,371.9)" fill="none" stroke="#e0575a" stroke-width=".9" stroke-linecap="round"><rect x="-1.5" y="-4.6" width="3" height="6" rx="1.5" fill="#e0575a" fill-opacity=".55"/><path d="M-2.9 -.4a2.9 2.9 0 0 0 5.8 0M0 2.6V4.3M-1.6 4.4H1.6"/><path d="M-4.6 4.8L4.4 -4.8" stroke-width="1"/></g><g transform="translate(1003.6,371.9)" fill="none" stroke="#e0575a" stroke-width=".95" stroke-linejoin="round"><rect x="0" y="-3" width="7" height="6" rx="1.4"/><path d="M7.6 -1L10 -2.6V2.6L7.6 1"/><path d="M.4 5L10 -4.8" stroke-width="1" stroke-linecap="round"/></g><g transform="translate(993.4,398.1)" fill="none" stroke="#e0575a" stroke-width=".9" stroke-linecap="round"><rect x="-1.5" y="-4.6" width="3" height="6" rx="1.5" fill="#e0575a" fill-opacity=".55"/><path d="M-2.9 -.4a2.9 2.9 0 0 0 5.8 0M0 2.6V4.3M-1.6 4.4H1.6"/><path d="M-4.6 4.8L4.4 -4.8" stroke-width="1"/></g><g transform="translate(1003.6,398.1)" fill="none" stroke="#e0575a" stroke-width=".95" stroke-linejoin="round"><rect x="0" y="-3" width="7" height="6" rx="1.4"/><path d="M7.6 -1L10 -2.6V2.6L7.6 1"/><path d="M.4 5L10 -4.8" stroke-width="1" stroke-linecap="round"/></g><g transform="translate(993.4,424.4)" fill="none" stroke="#e0575a" stroke-width=".9" stroke-linecap="round"><rect x="-1.5" y="-4.6" width="3" height="6" rx="1.5" fill="#e0575a" fill-opacity=".55"/><path d="M-2.9 -.4a2.9 2.9 0 0 0 5.8 0M0 2.6V4.3M-1.6 4.4H1.6"/><path d="M-4.6 4.8L4.4 -4.8" stroke-width="1"/></g><g transform="translate(1003.6,424.4)" fill="none" stroke="#8a8a98" stroke-width=".95" stroke-linejoin="round"><rect x="0" y="-3" width="7" height="6" rx="1.4"/><path d="M7.6 -1L10 -2.6V2.6L7.6 1"/></g><g transform="translate(993.4,450.6)" fill="none" stroke="#e0575a" stroke-width=".9" stroke-linecap="round"><rect x="-1.5" y="-4.6" width="3" height="6" rx="1.5" fill="#e0575a" fill-opacity=".55"/><path d="M-2.9 -.4a2.9 2.9 0 0 0 5.8 0M0 2.6V4.3M-1.6 4.4H1.6"/><path d="M-4.6 4.8L4.4 -4.8" stroke-width="1"/></g><g transform="translate(1003.6,450.6)" fill="none" stroke="#e0575a" stroke-width=".95" stroke-linejoin="round"><rect x="0" y="-3" width="7" height="6" rx="1.4"/><path d="M7.6 -1L10 -2.6V2.6L7.6 1"/><path d="M.4 5L10 -4.8" stroke-width="1" stroke-linecap="round"/></g></svg>
  <div class="abs" style="left:1.2px;top:518px;width:62.5px;height:30.6px;border-radius:5px;background:#3a3a3a"></div>
<svg style="left:0;top:0" width="1024" height="576" viewBox="0 0 1024 576">
<g fill="none" stroke="#c8c8c8" stroke-width="1.2"><path d="M33 530.6V533M29.6 533.3H36.4"/></g><path d="M25.5 534.5L31 529" stroke="#e0383e" stroke-width="1.2"/>
<path d="M95.5 534.5L101 529" stroke="#e0383e" stroke-width="1.2"/>
<path d="M192.8 530.5C194 532.5 195 533.2 196 533.8C197 533.2 198 532.5 199.2 530.5" fill="none" stroke="#c8c8c8" stroke-width="1.2"/>
<g fill="#c8c8c8"><circle cx="264.2" cy="524.6" r="2.7"/><path d="M259 532.6V531C259 529 261 528 264.2 528S269.4 529 269.4 531V532.6Z"/><circle cx="270.6" cy="525.6" r="2.1"/><path d="M270.6 528.6C273 528.6 274.6 529.6 274.6 531.2V532.6H270.6V530.6C270.6 529.8 270.4 529.2 269.8 528.7Z"/></g>
<text x="277.4" y="528.8" font-family="'Liberation Sans',sans-serif" font-size="8.2" fill="#e8e8e8">15</text>
<path d="M297.7 529.6L300.3 527L302.90000000000003 529.6" fill="none" stroke="#c4c4c4" stroke-width="1"/>
<path d="M355.4 529.6L358 527L360.6 529.6" fill="none" stroke="#c4c4c4" stroke-width="1"/>
<path d="M444.4 529.6L447 527L449.6 529.6" fill="none" stroke="#c4c4c4" stroke-width="1"/>
<path d="M552.4 529.6L555 527L557.6 529.6" fill="none" stroke="#c4c4c4" stroke-width="1"/>
<path d="M627.9 529.6L630.5 527L633.1 529.6" fill="none" stroke="#c4c4c4" stroke-width="1"/>
<path d="M332.6 522H342.2A1.8 1.8 0 0 1 344 523.8V528.6A1.8 1.8 0 0 1 342.2 530.4H337.2L333.8 533.2V530.4H332.6A1.8 1.8 0 0 1 330.8 528.6V523.8A1.8 1.8 0 0 1 332.6 522Z" fill="#c8c8c8"/>
<rect x="402.3" y="521.6" width="15.7" height="11" rx="2" fill="#23d25a"/><path d="M410.15 523.8L413.2 527H411V530.2H409.3V527H407.1Z" fill="#10301a"/>
<circle cx="480.6" cy="527.8" r="4.6" fill="#c8c8c8"/><circle cx="479" cy="526.8" r=".7" fill="#1a1a1a"/><circle cx="482.2" cy="526.8" r=".7" fill="#1a1a1a"/><path d="M478.4 528.8A2.4 2.4 0 0 0 482.8 528.8Z" fill="#1a1a1a"/><path d="M485.6 521V524.4M483.9 522.7H487.3" stroke="#c8c8c8" stroke-width="1"/>
<g fill="none" stroke="#c8c8c8" stroke-width="1.1"><path d="M531.6 523H530.6A1.2 1.2 0 0 0 529.4 524.2V525.4M536.8 532.2H537.8A1.2 1.2 0 0 0 539 531V529.8M532.8 532.2H534.8M529.4 527.6V529.2"/><circle cx="537.6" cy="524.4" r="1.7"/><circle cx="531" cy="530.8" r="1.7"/></g>
<g fill="none" stroke="#c8c8c8" stroke-width="1.2"><path d="M598.6 531.6H596.8A1.2 1.2 0 0 1 595.6 530.4V523A1.2 1.2 0 0 1 596.8 521.8H605.8A1.2 1.2 0 0 1 607 523V527.6"/></g><rect x="600.6" y="529.2" width="7" height="3.4" rx="1.2" fill="#c8c8c8"/>
<circle cx="667.4" cy="527" r="1.1" fill="#c8c8c8"/><circle cx="672" cy="527" r="1.1" fill="#c8c8c8"/><circle cx="676.6" cy="527" r="1.1" fill="#c8c8c8"/>
</svg>
<div class="abs" style="left:750px;top:525px;width:61.6px;height:17px;border-radius:4.5px;background:#c9242b;color:#fff;font-weight:bold;font-size:7.8px;line-height:16.5px;text-align:center;letter-spacing:-.1px">Завершение</div>
<div class="abs" style="left:30.5px;top:499.3px;width:198.5px;height:31.4px;border:1px solid #8e8e98;border-radius:3px;background:linear-gradient(to bottom,#ffffff,#ececf6);color:#505058;font-size:8px;line-height:9.7px;padding:.7px 0 0 2.2px;white-space:nowrap"><span id="tt1" style="display:inline-block;transform-origin:0 50%;transform:scaleX(0.9744)">Используйте функцию Включить мой звук (Alt+A)</span><br><span id="tt2" style="display:inline-block;transform-origin:0 50%;transform:scaleX(0.9508)">или нажмите и удерживайте клавишу ПРОБЕЛ, чтобы</span><br><span id="tt3" style="display:inline-block;transform-origin:0 50%;transform:scaleX(0.9668)">временно включить звук.</span></div>
  <div class="tl" style="left:6.6px;color:#d4d4d4"><span id="tl0" style="display:inline-block;transform-origin:0 50%;transform:scaleX(0.9895)">Включить звук</span></div>
<div class="tl" style="left:78.0px;color:#d4d4d4"><span id="tl1" style="display:inline-block;transform-origin:0 50%;transform:scaleX(0.9637)">Начать видео</span></div>
<div class="tl" style="left:171.9px;color:#d4d4d4"><span id="tl2" style="display:inline-block;transform-origin:0 50%;transform:scaleX(0.9484)">Безопасность</span></div>
<div class="tl" style="left:248.4px;color:#d4d4d4"><span id="tl3" style="display:inline-block;transform-origin:0 50%;transform:scaleX(0.9707)">Участники</span></div>
<div class="tl" style="left:330.9px;color:#d4d4d4"><span id="tl4" style="display:inline-block;transform-origin:0 50%;transform:scaleX(0.9186)">Чат</span></div>
<div class="tl" style="left:370.6px;color:#2fd35e"><span id="tl5" style="display:inline-block;transform-origin:0 50%;transform:scaleX(0.9749)">Демонстрация экрана</span></div>
<div class="tl" style="left:466.1px;color:#d4d4d4"><span id="tl6" style="display:inline-block;transform-origin:0 50%;transform:scaleX(0.9674)">Реакции</span></div>
<div class="tl" style="left:511.7px;color:#d4d4d4"><span id="tl7" style="display:inline-block;transform-origin:0 50%;transform:scaleX(0.9912)">Приложения</span></div>
<div class="tl" style="left:568.3px;color:#d4d4d4"><span id="tl8" style="display:inline-block;transform-origin:0 50%;transform:scaleX(0.9907)">Доски сообщений</span></div>
<div class="tl" style="left:643.9px;color:#d4d4d4"><span id="tl9" style="display:inline-block;transform-origin:0 50%;transform:scaleX(0.9900)">Дополнительно</span></div>
  <div id="taskbar" class="abs"></div>
  <div class="abs" style="left:0;top:550px;width:1024px;height:1.2px;background:rgba(20,30,50,.75)"></div>
<div class="abs" style="left:0;top:551.2px;width:1024px;height:1px;background:rgba(170,210,245,.22)"></div>
<div class="abs" style="left:0;top:551px;width:1024px;height:25px;overflow:hidden"><div class="abs" style="left:40px;top:-40px;width:200px;height:120px;border-radius:50%;background:radial-gradient(ellipse at center,rgba(120,190,235,.5),rgba(120,190,235,0) 70%)"></div><svg style="left:0;top:0" width="1024" height="25" viewBox="0 551 1024 25"><defs><filter id="tbl" x="-20%" y="-50%" width="140%" height="200%"><feGaussianBlur stdDeviation="1.3"/></filter></defs><path d="M660 546C700 550 722 560 741 580" fill="none" stroke="#d4e6f6" stroke-opacity=".8" stroke-width="5" filter="url(#tbl)"/><path d="M560 548C600 552 625 562 640 580" fill="none" stroke="#8cc4ee" stroke-opacity=".25" stroke-width="8" filter="url(#tbl)"/></svg></div>
<div class="tbtn" style="left:128.5px;width:36.5px;"></div>
<div class="tbtn" style="left:207.5px;width:36.5px;"></div>
<div class="tbtn" style="left:247px;width:37px;"></div>
<div class="tbtn" style="left:287px;width:37px;"></div>
<div class="tbtn" style="left:326.5px;width:37px;"></div>
<div class="tbtn" style="left:366px;width:36px;background:linear-gradient(to bottom,rgba(255,255,255,.5),rgba(255,255,255,.3) 45%,rgba(255,255,255,.18) 50%,rgba(255,255,255,.35));"></div>
<div class="tbtn" style="left:405.5px;width:36.5px;"></div>
<div class="tbtn" style="left:445.5px;width:36.5px;"></div>
<svg style="left:0;top:0" width="1024" height="576" viewBox="0 0 1024 576">
<defs><radialGradient id="orb" cx="50%" cy="35%" r="65%"><stop offset="0" stop-color="#8fd0f5"/><stop offset=".55" stop-color="#2f78c0"/><stop offset="1" stop-color="#143c78"/></radialGradient></defs>
<circle cx="17.4" cy="563.8" r="11.8" fill="url(#orb)" stroke="#1d4f8f" stroke-width=".8"/><ellipse cx="17.4" cy="557.6" rx="8.6" ry="4.6" fill="#fff" opacity=".22"/>
<g transform="translate(17.2 564) scale(1.15) translate(-16.8 -564)"><path d="M11.6 558.6C13.4 557.6 15 557.8 16.6 558.6L15.8 563.2C14.2 562.4 12.6 562.4 10.8 563.2Z" fill="#e8552a"/><path d="M17.8 558.9C19.6 559.7 21.2 559.7 23 558.9L22.2 563.5C20.4 564.3 18.8 564.3 17 563.5Z" fill="#8cc63f"/><path d="M10.6 564.4C12.4 563.6 14 563.6 15.6 564.4L14.8 569C13.2 568.2 11.6 568.2 9.8 569Z" fill="#3a9be0"/><path d="M16.8 564.7C18.6 565.5 20.2 565.5 22 564.7L21.2 569.3C19.4 570.1 17.8 570.1 16 569.3Z" fill="#f7c52a"/></g>
<rect x="38.2" y="554.6" width="1.1" height="1.1" fill="#163a66"/><rect x="40.6" y="554.6" width="1.1" height="1.1" fill="#163a66"/><rect x="42.9" y="554.6" width="1.1" height="1.1" fill="#163a66"/>
<rect x="38.2" y="557.1" width="1.1" height="1.1" fill="#163a66"/><rect x="40.6" y="557.1" width="1.1" height="1.1" fill="#163a66"/><rect x="42.9" y="557.1" width="1.1" height="1.1" fill="#163a66"/>
<rect x="38.2" y="559.6" width="1.1" height="1.1" fill="#163a66"/><rect x="40.6" y="559.6" width="1.1" height="1.1" fill="#163a66"/><rect x="42.9" y="559.6" width="1.1" height="1.1" fill="#163a66"/>
<rect x="38.2" y="562.1" width="1.1" height="1.1" fill="#163a66"/><rect x="40.6" y="562.1" width="1.1" height="1.1" fill="#163a66"/><rect x="42.9" y="562.1" width="1.1" height="1.1" fill="#163a66"/>
<rect x="38.2" y="564.6" width="1.1" height="1.1" fill="#163a66"/><rect x="40.6" y="564.6" width="1.1" height="1.1" fill="#163a66"/><rect x="42.9" y="564.6" width="1.1" height="1.1" fill="#163a66"/>
<rect x="38.2" y="567.1" width="1.1" height="1.1" fill="#163a66"/><rect x="40.6" y="567.1" width="1.1" height="1.1" fill="#163a66"/><rect x="42.9" y="567.1" width="1.1" height="1.1" fill="#163a66"/>
<rect x="38.2" y="569.6" width="1.1" height="1.1" fill="#163a66"/><rect x="40.6" y="569.6" width="1.1" height="1.1" fill="#163a66"/><rect x="42.9" y="569.6" width="1.1" height="1.1" fill="#163a66"/>
<rect x="38.2" y="572.1" width="1.1" height="1.1" fill="#163a66"/><rect x="40.6" y="572.1" width="1.1" height="1.1" fill="#163a66"/><rect x="42.9" y="572.1" width="1.1" height="1.1" fill="#163a66"/>
<rect x="58.6" y="556.5" width="15.6" height="15.6" rx="1" fill="#5aa7dc" stroke="#8fc6ea" stroke-width=".8"/><circle cx="65.6" cy="564" r="5.4" fill="#f08a1c" stroke="#fbd9a8" stroke-width=".8"/><path d="M63.9 561L68.6 564L63.9 567Z" fill="#fff"/>
<text x="99.4" y="573.6" font-family="'Liberation Sans',sans-serif" font-weight="bold" font-size="28" fill="#74d4f8" stroke="#2a8fd4" stroke-width=".5">e</text><path d="M99 571C95.4 569 98 561.6 105.4 556.6C111 553.4 116.6 553.4 117.2 555.8C117.6 557.4 116.6 559.2 115 560.8" fill="none" stroke="#f3c43a" stroke-width="2" stroke-linecap="round"/>
<g transform="translate(146.6 564) scale(1.16) translate(-146.6 -564.4)"><path d="M137.5 557.4H143.5L145 559H155.6V571.2H137.5Z" fill="#e8c560" stroke="#b38f2e" stroke-width=".6"/><rect x="138.6" y="560.6" width="16" height="10.6" fill="#f7e4a0"/><rect x="141" y="565.6" width="11.4" height="5.6" rx="1" fill="#8ec3ea" stroke="#5a93c6" stroke-width=".6"/><rect x="143.6" y="568" width="6.2" height="3.2" fill="#e6f1fa"/><rect x="141" y="556.6" width="2" height="1.4" fill="#3aa64a"/><rect x="145" y="556.8" width="2" height="1.4" fill="#e04a3a"/></g>
<circle cx="186.2" cy="563" r="10.4" fill="#fbc116"/><path d="M186.2 563L177.19 557.80A10.4 10.4 0 0 1 195.21 557.80Z" fill="#e33b2e"/><path d="M186.2 563L186.20 573.40A10.4 10.4 0 0 1 177.19 557.80Z" fill="#2da94f"/><circle cx="186.2" cy="563" r="4.89" fill="#fff"/><circle cx="186.2" cy="563" r="3.74" fill="#3f7fe8"/>
<circle cx="225.6" cy="563" r="10.4" fill="#fbc116"/><path d="M225.6 563L216.59 557.80A10.4 10.4 0 0 1 234.61 557.80Z" fill="#e33b2e"/><path d="M225.6 563L225.60 573.40A10.4 10.4 0 0 1 216.59 557.80Z" fill="#2da94f"/><circle cx="225.6" cy="563" r="4.89" fill="#fff"/><circle cx="225.6" cy="563" r="3.74" fill="#3f7fe8"/><circle cx="230.6" cy="568.6" r="3.8" fill="#c9b8b0" stroke="#8a7a72" stroke-width=".5"/>
<circle cx="265.4" cy="563" r="10.4" fill="#fbc116"/><path d="M265.4 563L256.39 557.80A10.4 10.4 0 0 1 274.41 557.80Z" fill="#e33b2e"/><path d="M265.4 563L265.40 573.40A10.4 10.4 0 0 1 256.39 557.80Z" fill="#2da94f"/><circle cx="265.4" cy="563" r="4.89" fill="#fff"/><circle cx="265.4" cy="563" r="3.74" fill="#3f7fe8"/><circle cx="270.4" cy="568.6" r="3.8" fill="#f07a1a"/><text x="270.4" y="570.4" font-size="4.6" font-family="'Liberation Sans',sans-serif" fill="#fff" text-anchor="middle">T</text>
<circle cx="305" cy="563" r="10.4" fill="#fbc116"/><path d="M305 563L295.99 557.80A10.4 10.4 0 0 1 314.01 557.80Z" fill="#e33b2e"/><path d="M305 563L305.00 573.40A10.4 10.4 0 0 1 295.99 557.80Z" fill="#2da94f"/><circle cx="305" cy="563" r="4.89" fill="#fff"/><circle cx="305" cy="563" r="3.74" fill="#3f7fe8"/><circle cx="310" cy="568.6" r="3.8" fill="#8f9aa6"/><text x="310" y="570.4" font-size="4.6" font-family="'Liberation Sans',sans-serif" fill="#fff" text-anchor="middle">K</text>
<path d="M341 553.4H349.4A5.6 5.6 0 0 1 355 559V563.4A5.6 5.6 0 0 1 349.4 569H344.6L341 572.8V568.8A5.6 5.6 0 0 1 335.6 563.4V559A5.6 5.6 0 0 1 341 553.4Z" fill="#7d60d2" stroke="#efeafc" stroke-width="1.3"/><path d="M340.8 557.2C340 558 340 559 340.6 560.2C341.8 562.4 343.4 564 345.6 565.2C346.8 565.8 347.8 565.8 348.6 565L347.4 563.2L346.2 563.6C344.6 562.8 343.2 561.4 342.4 559.8L342.8 558.6Z" fill="#fff"/><path d="M346 556.6A4.4 4.4 0 0 1 350.6 561.2M346.2 558.4A2.6 2.6 0 0 1 348.8 561" fill="none" stroke="#fff" stroke-width=".7"/>
<rect x="345.6" y="564.4" width="9.8" height="8.6" rx="1.2" fill="#e02a2a"/><text x="350.5" y="571.2" font-size="6.6" font-weight="bold" font-family="'Liberation Sans',sans-serif" fill="#fff" text-anchor="middle">45</text>
<rect x="373.4" y="553.6" width="20.8" height="20.6" rx="8.6" fill="#0b5cff"/><text x="383.8" y="565.6" font-size="5.6" font-weight="bold" font-family="'Liberation Sans',sans-serif" fill="#fff" text-anchor="middle">zoom</text>
<circle cx="423.8" cy="563.4" r="9.2" fill="#2aa3dc"/><path d="M417.8 563.4L429.6 558.6L427.6 568.6L424 566L422.2 567.8L422 565L427 560.6L420.8 564.4Z" fill="#fff"/><rect x="424.6" y="567.4" width="9.4" height="6" rx=".8" fill="#e02a2a"/><text x="429.3" y="572.4" font-size="4.8" font-weight="bold" font-family="'Liberation Sans',sans-serif" fill="#fff" text-anchor="middle">378</text>
<rect x="456.4" y="553.6" width="15.6" height="18.6" fill="#eef3fb" stroke="#b8c8e0" stroke-width=".6"/><rect x="454.4" y="556" width="10" height="12.6" fill="#dfe8f6" opacity=".7"/><text x="463.2" y="567.6" font-size="14.5" font-weight="bold" font-family="'Liberation Sans',sans-serif" fill="#2a5db4" stroke="#1b4388" stroke-width=".3" text-anchor="middle">W</text><path d="M465.4 566.4L473.4 567.6L472.4 572.6L464.6 571.4Z" fill="#f6f8fc" stroke="#9fb0cc" stroke-width=".4"/><path d="M466.4 568.2L471.6 569M466.2 569.8L471.4 570.6" stroke="#9fb0cc" stroke-width=".4"/>
<rect x="871.6" y="553.6" width="1" height="1" fill="#16345e"/>
<rect x="873.5" y="553.6" width="1" height="1" fill="#16345e"/>
<rect x="875.4" y="553.6" width="1" height="1" fill="#16345e"/>
<rect x="871.6" y="555.9" width="1" height="1" fill="#16345e"/>
<rect x="873.5" y="555.9" width="1" height="1" fill="#16345e"/>
<rect x="875.4" y="555.9" width="1" height="1" fill="#16345e"/>
<rect x="871.6" y="558.2" width="1" height="1" fill="#16345e"/>
<rect x="873.5" y="558.2" width="1" height="1" fill="#16345e"/>
<rect x="875.4" y="558.2" width="1" height="1" fill="#16345e"/>
<rect x="871.6" y="560.5" width="1" height="1" fill="#16345e"/>
<rect x="873.5" y="560.5" width="1" height="1" fill="#16345e"/>
<rect x="875.4" y="560.5" width="1" height="1" fill="#16345e"/>
<rect x="871.6" y="562.8000000000001" width="1" height="1" fill="#16345e"/>
<rect x="873.5" y="562.8000000000001" width="1" height="1" fill="#16345e"/>
<rect x="875.4" y="562.8000000000001" width="1" height="1" fill="#16345e"/>
<rect x="871.6" y="565.1" width="1" height="1" fill="#16345e"/>
<rect x="873.5" y="565.1" width="1" height="1" fill="#16345e"/>
<rect x="875.4" y="565.1" width="1" height="1" fill="#16345e"/>
<rect x="871.6" y="567.4" width="1" height="1" fill="#16345e"/>
<rect x="873.5" y="567.4" width="1" height="1" fill="#16345e"/>
<rect x="875.4" y="567.4" width="1" height="1" fill="#16345e"/>
<rect x="871.6" y="569.7" width="1" height="1" fill="#16345e"/>
<rect x="873.5" y="569.7" width="1" height="1" fill="#16345e"/>
<rect x="875.4" y="569.7" width="1" height="1" fill="#16345e"/>
<rect x="871.6" y="572.0" width="1" height="1" fill="#16345e"/>
<rect x="873.5" y="572.0" width="1" height="1" fill="#16345e"/>
<rect x="875.4" y="572.0" width="1" height="1" fill="#16345e"/>
<text x="881.4" y="567" font-size="8.4" font-family="'Liberation Sans',sans-serif" fill="#fff" letter-spacing="-.2">UK</text>
<path d="M896 561.6H905.6V568.4H896Z" fill="#d8d4c4" stroke="#8a8678" stroke-width=".5"/><path d="M897 563H904.6M897 564.8H904.6M898.4 566.6H903.2" stroke="#8a8678" stroke-width=".6"/><path d="M900.8 561.6C900.8 560 902 559.6 903.4 559" fill="none" stroke="#d8d4c4" stroke-width=".6"/>
<circle cx="914.6" cy="563.6" r="4.8" fill="#1c2fb8" stroke="#dfe6ff" stroke-width=".8"/><text x="914.6" y="566.6" font-size="8" font-weight="bold" font-family="'Liberation Sans',sans-serif" fill="#fff" text-anchor="middle">?</text>
<rect x="927.6" y="556.6" width="3.4" height="2.2" fill="none" stroke="#fff" stroke-width=".6"/><rect x="926.2" y="558" width="3.4" height="2.2" fill="#2a64a8" stroke="#fff" stroke-width=".6"/><path d="M927 564.6H930.6L928.8 566.6Z" fill="#fff"/>
<path d="M938.2 566.2L940.2 563.6L942.2 566.2Z" fill="#fff"/>
<path d="M951.6 562.4H953.4L956.2 559.8V568.4L953.4 565.8H951.6Z" fill="#f2f2f2"/><path d="M957.6 562A2.6 2.6 0 0 1 957.6 566.2M959 560.6A4.4 4.4 0 0 1 959 567.6" fill="none" stroke="#e8e8e8" stroke-width=".7"/>
<text x="990.4" y="561.2" font-size="8.3" font-family="'Liberation Sans',sans-serif" fill="#fff" text-anchor="middle" letter-spacing="-.35">14:28</text><text x="990.4" y="572.6" font-size="8.3" font-family="'Liberation Sans',sans-serif" fill="#fff" text-anchor="middle" letter-spacing="-.35">10.04.2023</text>
</svg>
<div class="abs" style="left:1015.5px;top:551px;width:8.5px;height:25px;border-left:1px solid rgba(20,40,80,.7);background:linear-gradient(to right,rgba(160,200,240,.45),rgba(120,170,220,.2))"></div>
</div>
</body>
</html>
